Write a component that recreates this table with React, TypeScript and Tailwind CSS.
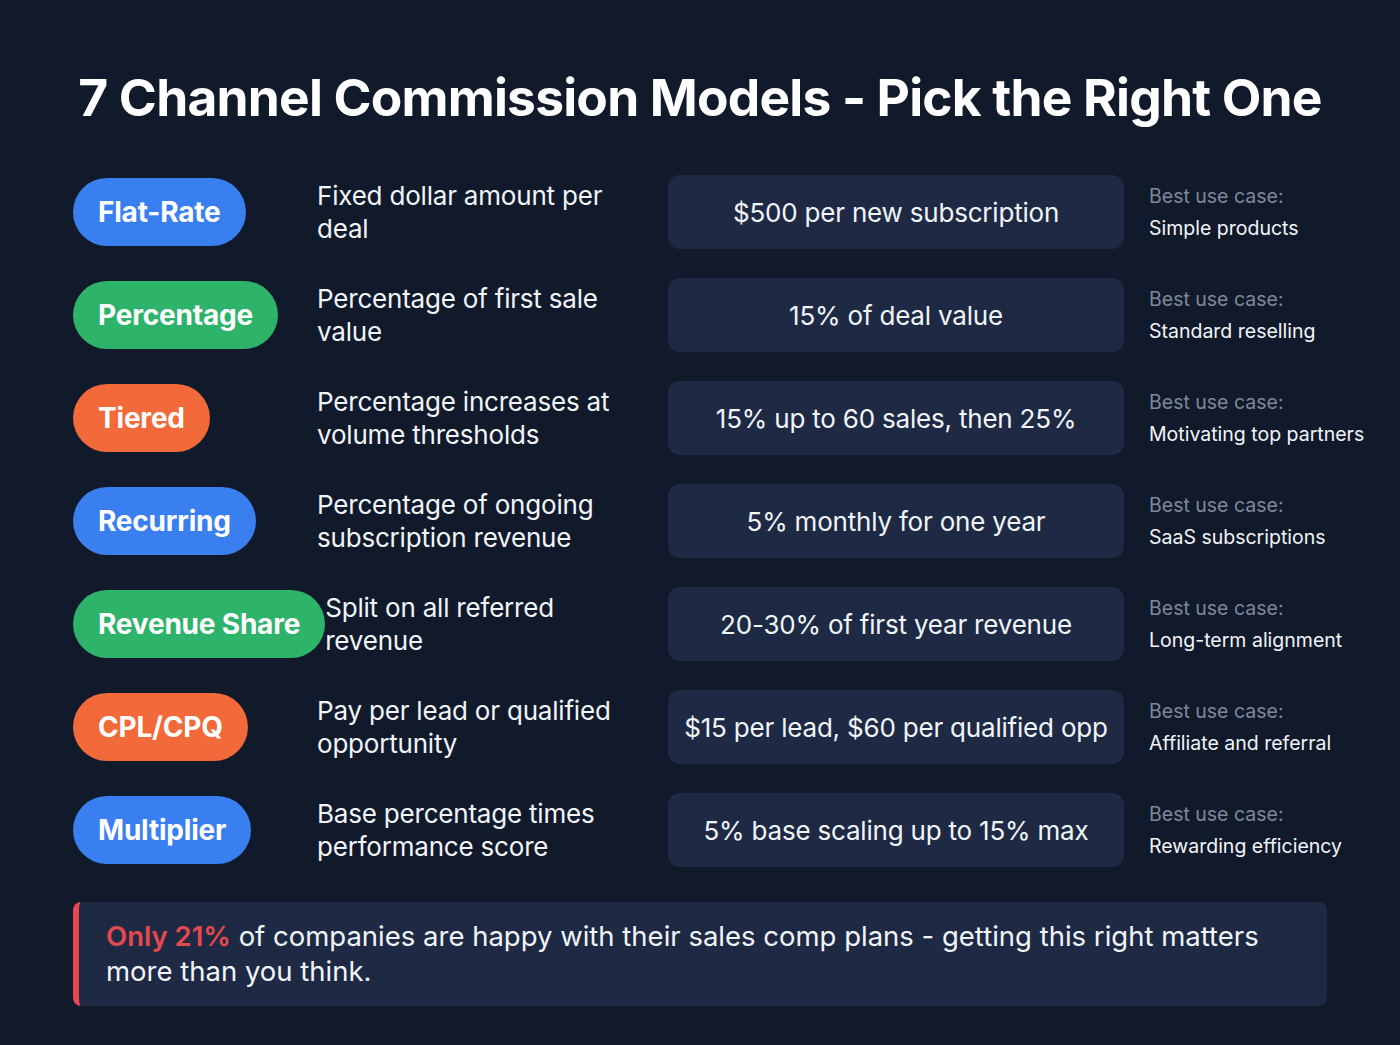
import React from 'react';

type Model = {
  name: string;
  color: string;
  desc: string;
  example: string;
  useCase: string;
};

const models: Model[] = [
  { name: 'Flat-Rate', color: 'bg-[#3a7ff0]', desc: 'Fixed dollar amount per deal', example: '$500 per new subscription', useCase: 'Simple products' },
  { name: 'Percentage', color: 'bg-[#2eb36a]', desc: 'Percentage of first sale value', example: '15% of deal value', useCase: 'Standard reselling' },
  { name: 'Tiered', color: 'bg-[#f2693a]', desc: 'Percentage increases at volume thresholds', example: '15% up to 60 sales, then 25%', useCase: 'Motivating top partners' },
  { name: 'Recurring', color: 'bg-[#3a7ff0]', desc: 'Percentage of ongoing subscription revenue', example: '5% monthly for one year', useCase: 'SaaS subscriptions' },
  { name: 'Revenue Share', color: 'bg-[#2eb36a]', desc: 'Split on all referred revenue', example: '20-30% of first year revenue', useCase: 'Long-term alignment' },
  { name: 'CPL/CPQ', color: 'bg-[#f2693a]', desc: 'Pay per lead or qualified opportunity', example: '$15 per lead, $60 per qualified opp', useCase: 'Affiliate and referral' },
  { name: 'Multiplier', color: 'bg-[#3a7ff0]', desc: 'Base percentage times performance score', example: '5% base scaling up to 15% max', useCase: 'Rewarding efficiency' },
];

const Row = ({ m }: { m: Model }) => (
  <div className="grid grid-cols-[595px_456px_1fr] items-center h-[74px]">
    <div className="flex items-center">
      <div className="min-w-[244px]">
        <span className={`inline-flex items-center h-[68px] px-[25px] rounded-full ${m.color} text-white text-[28px] font-bold tracking-[-0.2px]`}>
          {m.name}
        </span>
      </div>
      <p className="max-w-[300px] text-[26px] leading-[33px] text-[#f1f4f9] tracking-[-0.2px]">{m.desc}</p>
    </div>
    <div className="h-[74px] rounded-xl bg-[#1e2a44] flex items-center justify-center text-[26px] text-[#f1f4f9] tracking-[-0.2px]">
      {m.example}
    </div>
    <div className="ml-[25px] flex flex-col gap-[9px] whitespace-nowrap">
      <span className="text-[19.5px] leading-[22px] text-[#7e889a]">Best use case:</span>
      <span className="text-[19.5px] leading-[24px] text-[#f1f4f9]">{m.useCase}</span>
    </div>
  </div>
);

export default function App() {
  return (
    <div className="w-[1400px] h-[1045px] bg-[#111a2b] font-['Inter',sans-serif] px-[73px] pt-[66px]">
      <h1 className="text-center text-white text-[51.5px] leading-[62px] font-bold tracking-[-0.8px] whitespace-nowrap">
        7 Channel Commission Models - Pick the Right One
      </h1>
      <div className="mt-[47px] flex flex-col gap-[29px]">
        {models.map((m) => (
          <Row key={m.name} m={m} />
        ))}
      </div>
      <div className="mt-[35px] h-[104px] rounded-lg bg-[#1e2a44] border-l-[6px] border-[#e5484d] pl-[27px] pr-6 flex items-center">
        <p className="text-[27.5px] leading-[35px] text-[#f1f4f9]">
          <span className="font-semibold text-[#e5484d]">Only 21%</span> of companies are happy with their sales comp plans - getting this right matters more than you think.
        </p>
      </div>
    </div>
  );
}
